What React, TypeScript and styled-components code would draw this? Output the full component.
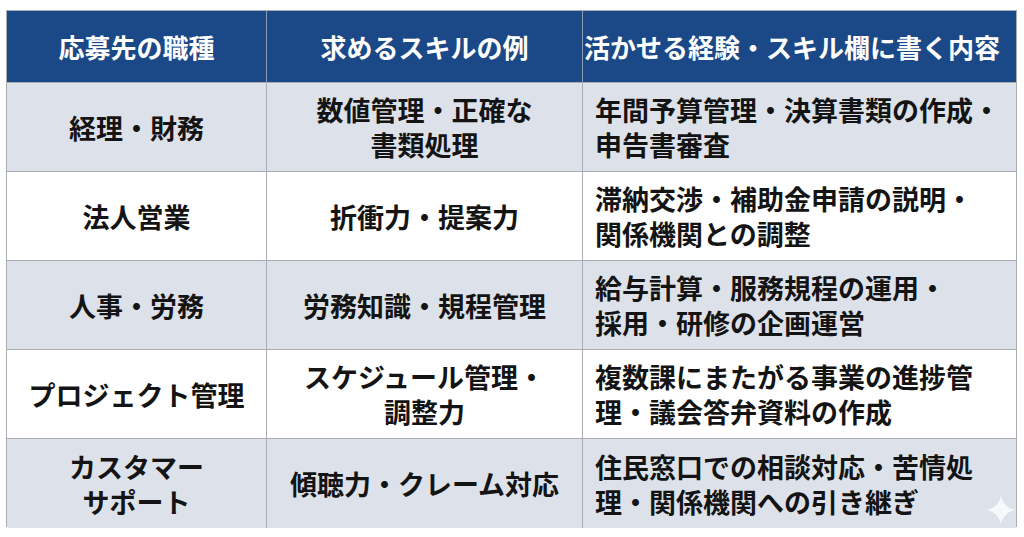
import React from 'react';
import styled, { createGlobalStyle } from 'styled-components';

type Row = {
    job: string[];
    skill: string[];
    detail: string[];
};

const rows: Row[] = [
    { job: ['経理・財務'], skill: ['数値管理・正確な', '書類処理'], detail: ['年間予算管理・決算書類の作成・', '申告書審査'] },
    { job: ['法人営業'], skill: ['折衝力・提案力'], detail: ['滞納交渉・補助金申請の説明・', '関係機関との調整'] },
    { job: ['人事・労務'], skill: ['労務知識・規程管理'], detail: ['給与計算・服務規程の運用・', '採用・研修の企画運営'] },
    { job: ['プロジェクト管理'], skill: ['スケジュール管理・', '調整力'], detail: ['複数課にまたがる事業の進捗管', '理・議会答弁資料の作成'] },
    { job: ['カスタマー', 'サポート'], skill: ['傾聴力・クレーム対応'], detail: ['住民窓口での相談対応・苦情処', '理・関係機関への引き継ぎ'] },
];

const App: React.FC = () => {
    return (
    <Page>
        <GlobalStyle />
        <Table>
            <HeadCell>応募先の職種</HeadCell>
            <HeadCell>求めるスキルの例</HeadCell>
            <HeadCell $left>活かせる経験・スキル欄に書く内容</HeadCell>
            {rows.map((r, i) => (
                <React.Fragment key={i}>
                    <Cell $shaded={i % 2 === 0} $lastRow={i === rows.length - 1}>
                        {r.job.map((l) => <Line key={l}>{l}</Line>)}
                    </Cell>
                    <Cell $shaded={i % 2 === 0} $lastRow={i === rows.length - 1}>
                        {r.skill.map((l) => <Line key={l}>{l}</Line>)}
                    </Cell>
                    <Cell $shaded={i % 2 === 0} $lastRow={i === rows.length - 1} $left $last>
                        {r.detail.map((l) => <Line key={l}>{l}</Line>)}
                    </Cell>
                </React.Fragment>
            ))}
        </Table>
        <Sparkle viewBox="0 0 24 24">
            <path d="M12 0 C12.8 6.5 17.5 11.2 24 12 C17.5 12.8 12.8 17.5 12 24 C11.2 17.5 6.5 12.8 0 12 C6.5 11.2 11.2 6.5 12 0 Z" />
        </Sparkle>
    </Page>
    );
};

export default App;

const GlobalStyle = createGlobalStyle`
    html, body {
        margin: 0;
        padding: 0;
        background: #ffffff;
    }
    body {
        font-family: "Noto Sans CJK JP", "Noto Sans", sans-serif;
    }
`;

const Page = styled.div`
    position: relative;
    width: 1024px;
    height: 537px;
    padding: 10px 7px 10px 6px;
    box-sizing: border-box;
    background: #ffffff;
    overflow: hidden;
`;

const Table = styled.div`
    display: grid;
    grid-template-columns: 260px 316px 1fr;
    grid-template-rows: 72px repeat(5, 89px);
    border: 1px solid #a9adb3;
    box-sizing: border-box;
    height: 517px;
`;

const HeadCell = styled.div<{ $left?: boolean }>`
    display: flex;
    align-items: center;
    justify-content: ${(p) => (p.$left ? 'flex-start' : 'center')};
    padding: 0 0 0 ${(p) => (p.$left ? '1px' : '0')};
    background: #1b4886;
    color: #ffffff;
    font-size: 26px;
    font-weight: 700;
    white-space: nowrap;
    border-right: ${(p) => (p.$left ? 'none' : '1px solid #8b9bb4')};
    border-bottom: 1px solid #a9adb3;
`;

const Cell = styled.div<{ $shaded: boolean; $lastRow: boolean; $left?: boolean; $last?: boolean }>`
    display: flex;
    flex-direction: column;
    justify-content: center;
    align-items: ${(p) => (p.$left ? 'flex-start' : 'center')};
    padding: ${(p) => (p.$left ? '0 0 0 12px' : '0')};
    background: ${(p) => (p.$shaded ? '#dde2ea' : '#ffffff')};
    color: #141414;
    font-size: 27px;
    font-weight: 700;
    line-height: 35px;
    white-space: nowrap;
    border-right: ${(p) => (p.$last ? 'none' : '1px solid #a9adb3')};
    border-bottom: ${(p) => (p.$lastRow ? 'none' : '1px solid #a9adb3')};
`;

const Line = styled.span`
    display: block;
    text-align: center;
`;

const Sparkle = styled.svg`
    position: absolute;
    right: 8px;
    bottom: 12px;
    width: 30px;
    height: 30px;
    fill: rgba(255, 255, 255, 0.75);
`;
